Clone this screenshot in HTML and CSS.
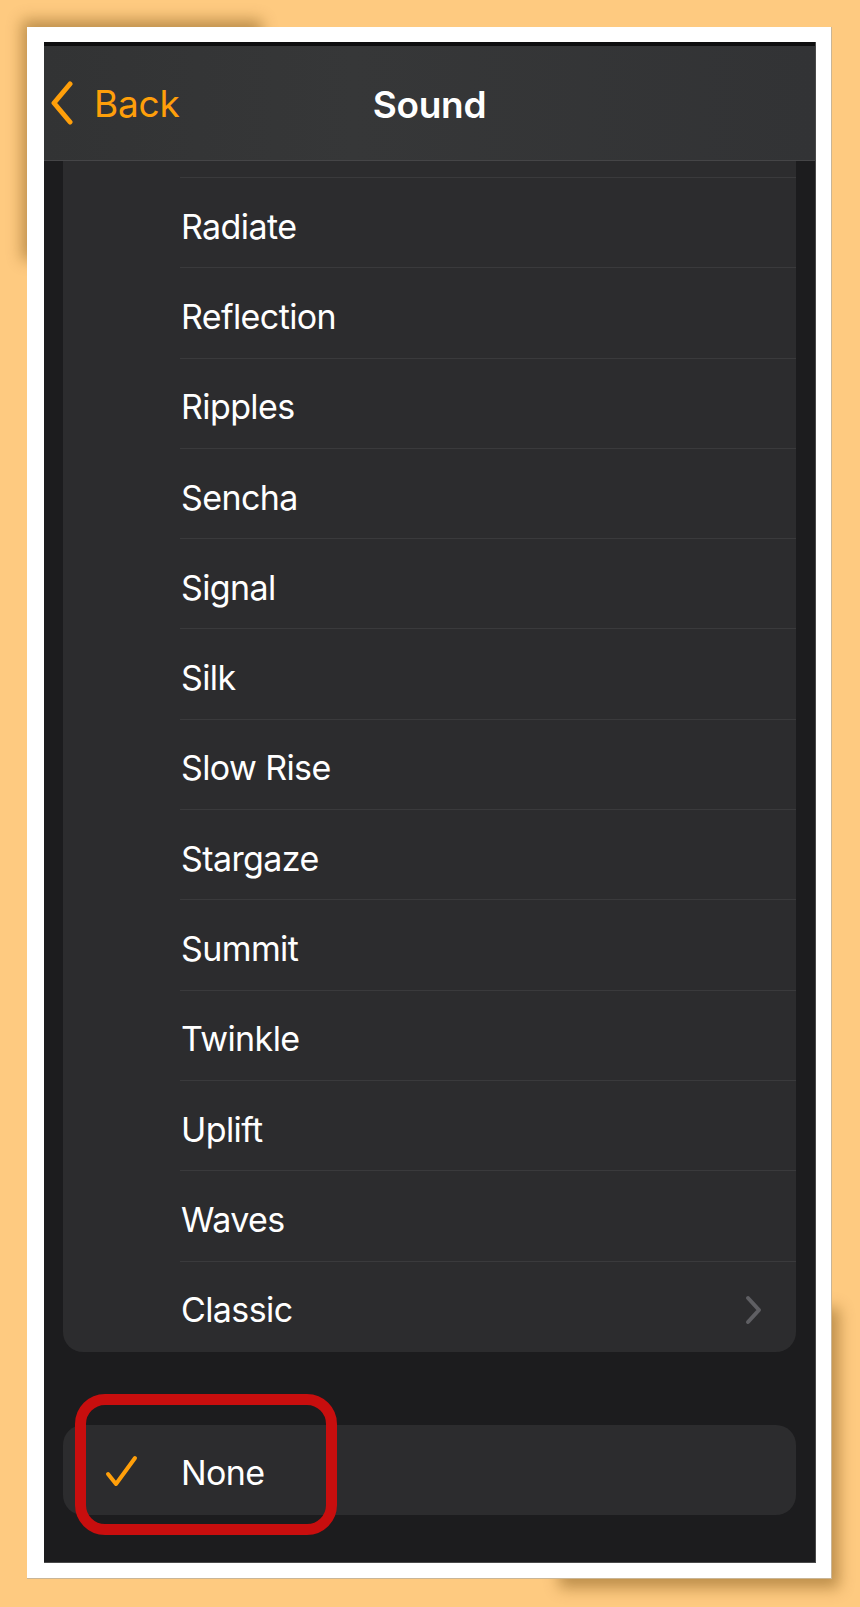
FILE: index.html
```html
<!DOCTYPE html>
<html lang="en">
<head>
<meta charset="utf-8">
<title>Sound</title>
<link rel="stylesheet" href="styles.css">
</head>
<body>
<div class="paper">
  <div class="screen">
    <div class="notch-strip"></div>
    <header class="nav">
      <a class="back">
        <svg class="back-chev" width="28" height="44" viewBox="0 0 28 44"><path d="M22 3 L6 22 L22 41" fill="none" stroke="#FF9F0A" stroke-width="5" stroke-linecap="round" stroke-linejoin="round"/></svg>
        <span>Back</span>
      </a>
      <h1 class="title">Sound</h1>
    </header>
    <main class="content">
      <section class="group list">
        <div class="row partial"></div>
        <div class="row"><span>Radiate</span></div>
        <div class="row"><span>Reflection</span></div>
        <div class="row"><span>Ripples</span></div>
        <div class="row"><span>Sencha</span></div>
        <div class="row"><span>Signal</span></div>
        <div class="row"><span>Silk</span></div>
        <div class="row"><span>Slow Rise</span></div>
        <div class="row"><span>Stargaze</span></div>
        <div class="row"><span>Summit</span></div>
        <div class="row"><span>Twinkle</span></div>
        <div class="row"><span>Uplift</span></div>
        <div class="row"><span>Waves</span></div>
        <div class="row last"><span>Classic</span>
          <svg class="chev" width="20" height="30" viewBox="0 0 20 30"><path d="M4 3 L15 15 L4 27" fill="none" stroke="#5f5f63" stroke-width="4" stroke-linecap="round" stroke-linejoin="round"/></svg>
        </div>
      </section>
      <section class="group single">
        <div class="row last selected">
          <svg class="check" width="34" height="34" viewBox="0 0 34 34"><path d="M3 19 L11 29 L30 3" fill="none" stroke="#FF9F0A" stroke-width="4" stroke-linecap="round" stroke-linejoin="round"/></svg>
          <span>None</span>
        </div>
        <div class="highlight"></div>
      </section>
    </main>
  </div>
</div>
</body>
</html>
```
FILE: styles.css
```css
html, body {
  margin: 0;
  padding: 0;
}
body {
  background: #FECA80;
  width: 860px;
  height: 1607px;
  overflow: hidden;
  font-family: Inter, "Liberation Sans", sans-serif;
}
.paper {
  position: relative;
  margin: 27px 0 0 27px;
  width: 805px;
  height: 1552px;
  box-sizing: border-box;
  padding: 15px 16px 16px 17px;
  background: #ffffff;
  border-right: 1px solid #c9b596;
  border-bottom: 1px solid #c9b596;
}
.paper::before {
  content: "";
  position: absolute;
  left: 0;
  top: 0;
  width: 240px;
  height: 240px;
  box-shadow: -5px -7px 14px rgba(110, 70, 10, 0.45);
  z-index: -1;
}
.paper::after {
  content: "";
  position: absolute;
  right: 0;
  bottom: 0;
  width: 280px;
  height: 280px;
  box-shadow: 8px 10px 14px rgba(110, 70, 10, 0.45);
  z-index: -1;
}
.screen {
  position: relative;
  width: 772px;
  height: 1521px;
  background: #1c1c1e;
  overflow: hidden;
  box-sizing: border-box;
  border-right: 1px solid #4a4a4a;
  border-bottom: 1px solid #4a4a4a;
  display: flex;
  flex-direction: column;
}
.notch-strip {
  height: 4px;
  background: #0e0e0f;
  flex: none;
}
.nav {
  flex: none;
  height: 115px;
  box-sizing: border-box;
  border-bottom: 1px solid #454547;
  background: linear-gradient(90deg, #323334 0%, #363738 40%, #323335 100%);
  position: relative;
  display: flex;
  align-items: center;
  justify-content: center;
}
.back {
  position: absolute;
  left: 4px;
  top: 34px;
  display: flex;
  align-items: center;
  gap: 18px;
  color: #FF9F0A;
  font-size: 37px;
  font-weight: 400;
  letter-spacing: -0.2px;
}
.back span {
  margin-top: 1px;
}
.title {
  margin: 0;
  color: #ffffff;
  font-size: 37px;
  font-weight: 600;
  letter-spacing: -0.3px;
  margin-top: 2px;
}
.content {
  flex: 1;
  padding: 0 19px 0 19px;
}
.group {
  background: #2c2c2e;
  border-radius: 0 0 20px 20px;
  position: relative;
}
.single {
  border-radius: 20px;
  margin-top: 73px;
}
.row {
  height: 90.3px;
  box-sizing: border-box;
  position: relative;
  display: flex;
  align-items: center;
  padding: 6px 0 0 118px;
  color: #ffffff;
  font-size: 34px;
  letter-spacing: -0.6px;
}
.row::after {
  content: "";
  position: absolute;
  left: 117px;
  right: 0;
  bottom: 0;
  height: 1px;
  background: #3a3a3c;
}
.row.partial {
  height: 17px;
  padding: 0;
}
.row.last {
  height: 90px;
}
.row.last::after {
  display: none;
}
.chev {
  position: absolute;
  right: 32px;
  top: 33px;
}
.check {
  position: absolute;
  left: 42px;
  top: 30px;
}
.highlight {
  position: absolute;
  left: 12px;
  top: -31px;
  width: 262px;
  height: 141px;
  box-sizing: border-box;
  border: 11px solid #C80E0E;
  border-radius: 30px;
  pointer-events: none;
}
```
